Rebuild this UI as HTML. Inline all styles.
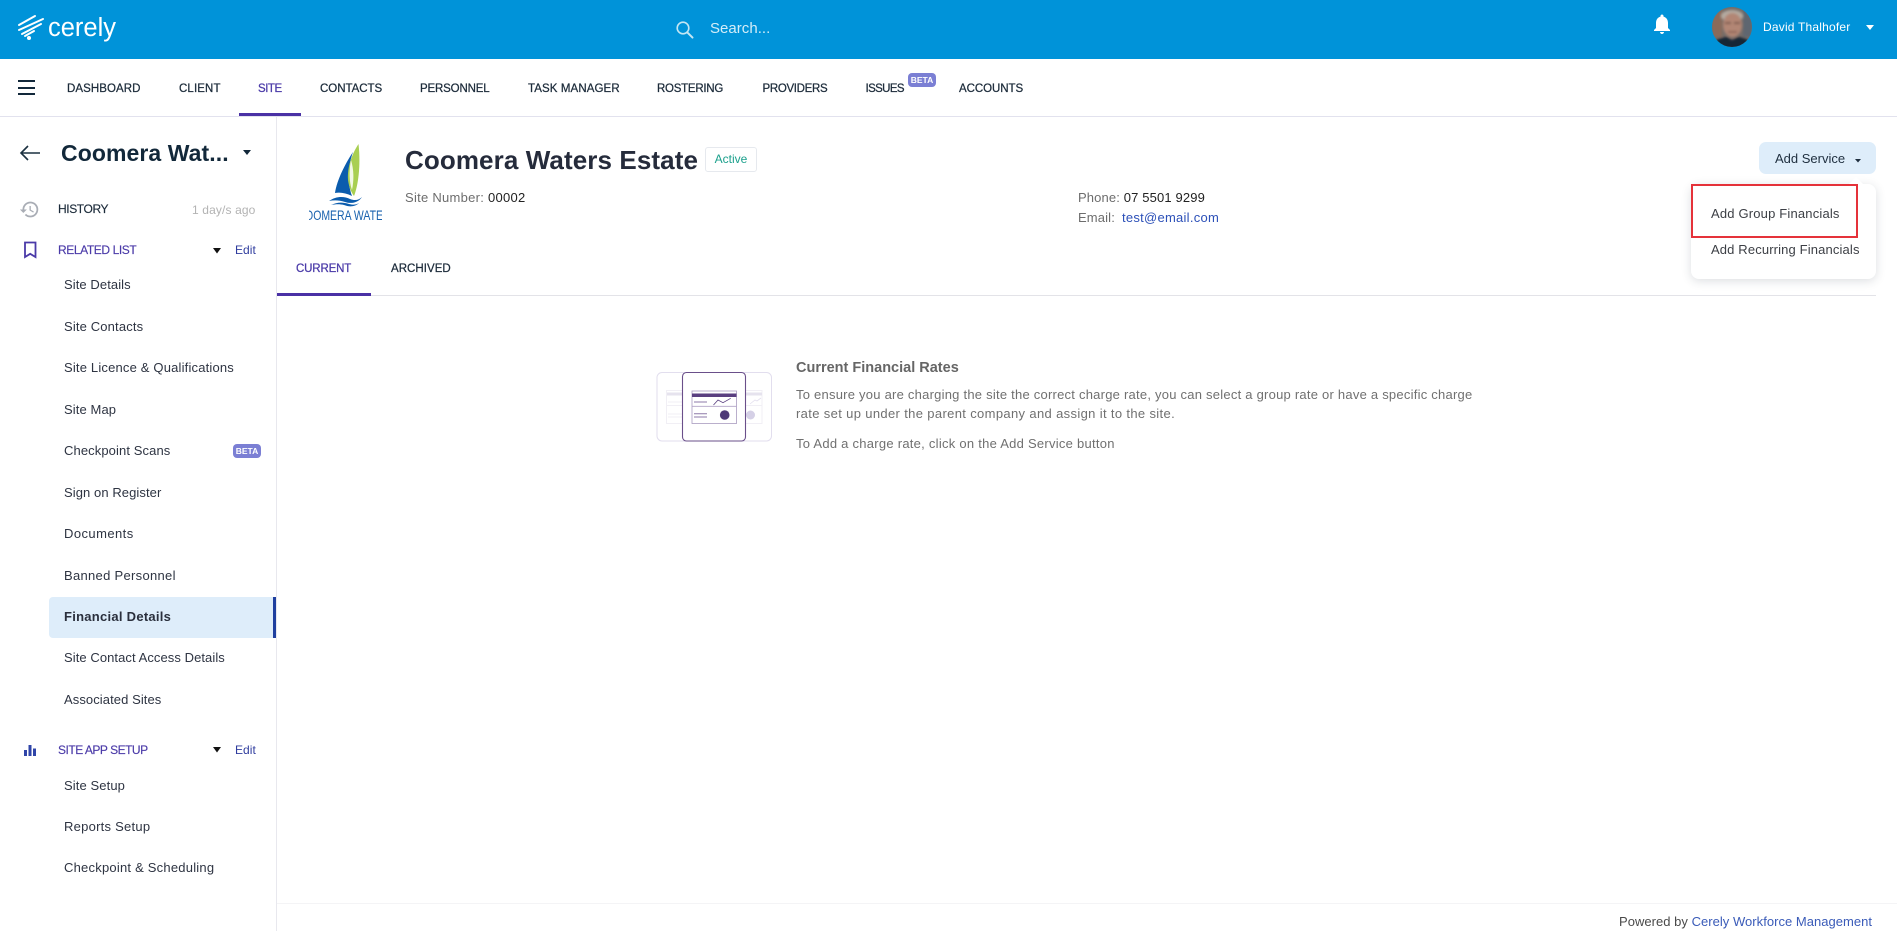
<!DOCTYPE html>
<html lang="en">
<head>
<meta charset="utf-8">
<title>Coomera Waters Estate - Cerely</title>
<style>
html,body{margin:0;padding:0;background:#fff}
body{width:1897px;height:931px;position:relative;overflow:hidden;font-family:"Liberation Sans",Arial,sans-serif;font-size:13px;color:#2b3040}
a{color:inherit;text-decoration:none}
.t{position:absolute;white-space:nowrap;line-height:20px;height:20px}
.b{position:absolute}
svg{position:absolute;overflow:visible}
.nav{font-size:11.5px;color:#1c2b3a;-webkit-text-stroke:.25px #1c2b3a}
.side{font-size:13px;color:#2e3442;left:64px;letter-spacing:.08px}
.sec{font-size:12px;color:#4a3aa8;-webkit-text-stroke:.15px #4a3aa8}
.edit{font-size:12px;letter-spacing:.05px;color:#2f3c9e}
.g{color:#6d6d6d}
.d{color:#222}
.p{left:796px;color:#707070;font-size:13px}
.beta{position:absolute;background:#7b7fd4;color:#fff;font-weight:bold;font-size:8.5px;line-height:14px;text-align:center;border-radius:4px}
</style>
</head>
<body>

<!-- top header -->
<div class="b" style="left:0;top:0;width:1897px;height:59px;background:#0093d9"></div>
<svg style="left:0;top:0" width="60" height="59" viewBox="0 0 60 59">
  <g stroke="#fff" stroke-width="2" stroke-linecap="round" fill="none">
    <path d="M19 25L35 16"/>
    <path d="M19 30L43 19"/>
    <path d="M22 34L41 24"/>
    <path d="M25 36L34 31"/>
  </g>
  <circle cx="29" cy="38" r="2" fill="#fff"/>
</svg>
<div class="t" style="left:48px;top:16px;font-size:25.5px;line-height:24px;height:24px;color:#fff">cerely</div>

<svg style="left:670px;top:18px" width="28" height="24" viewBox="670 18 28 24">
  <circle cx="683" cy="28" r="5.800" fill="none" stroke="#c4e6f3" stroke-width="1.600"/>
  <path d="M687.200 32.300L692.500 37.600" stroke="#c4e6f3" stroke-width="2" stroke-linecap="round"/>
</svg>
<div class="t" style="left:710px;top:19px;font-size:15px;letter-spacing:.03px;color:#d3edf8">Search...</div>

<svg style="left:1650px;top:12px" width="24" height="24" viewBox="0 0 24 24"><path fill="#fff" d="M12 22c1.100 0 2-.9 2-2h-4c0 1.100.9 2 2 2zm6-6v-5c0-3.070-1.630-5.640-4.500-6.320V4c0-.83-.67-1.500-1.500-1.500s-1.500.67-1.500 1.500v.68C7.640 5.360 6 7.920 6 11v5l-2 2v1h16v-1l-2-2z"/></svg>

<svg style="left:1712px;top:7px" width="40" height="40" viewBox="0 0 40 40">
  <defs>
    <clipPath id="av"><circle cx="20" cy="20" r="20"/></clipPath>
    <filter id="bl"><feGaussianBlur stdDeviation="1.300"/></filter>
  </defs>
  <g clip-path="url(#av)">
    <rect width="40" height="40" fill="#746c68"/>
    <g filter="url(#bl)">
      <rect x="0" y="0" width="10" height="30" fill="#8a6a5a"/>
      <rect x="31" y="0" width="9" height="30" fill="#5f6670"/>
      <ellipse cx="20" cy="9" rx="11" ry="6" fill="#b4aaa0"/>
      <ellipse cx="20.500" cy="18" rx="9.500" ry="12" fill="#b28674"/>
      <path d="M13 16h6M22 16h6" stroke="#6b4a40" stroke-width="1.400"/>
      <path d="M16 25h9" stroke="#7c5548" stroke-width="1.300"/>
      <path d="M0 42V36C6 31 12 30 15 30L20 33L26 30C30 30 36 32 40 36V42Z" fill="#192534"/>
    </g>
  </g>
</svg>
<div class="t" style="left:1763px;top:17px;font-size:12px;letter-spacing:.2px;color:#fff">David Thalhofer</div>
<svg style="left:1866px;top:25px" width="8" height="5" viewBox="0 0 8 5"><path d="M0 0H8L4 5Z" fill="#fff"/></svg>

<!-- main nav -->
<div class="b" style="left:0;top:116px;width:1897px;height:1px;background:#e2e2ee"></div>
<div class="b" style="left:18px;top:80px;width:17px;height:2px;background:#12283a"></div>
<div class="b" style="left:18px;top:87px;width:17px;height:2px;background:#12283a"></div>
<div class="b" style="left:18px;top:93px;width:17px;height:2px;background:#12283a"></div>

<div class="t nav" style="left:67px;top:79px;letter-spacing:.07px">DASHBOARD</div>
<div class="t nav" style="left:179px;top:79px;letter-spacing:.12px">CLIENT</div>
<div class="t nav" style="left:258px;top:79px;letter-spacing:-.47px;color:#4a3aa8;-webkit-text-stroke-color:#4a3aa8">SITE</div>
<div class="t nav" style="left:320px;top:79px;letter-spacing:-.03px">CONTACTS</div>
<div class="t nav" style="left:420px;top:79px;letter-spacing:-.16px">PERSONNEL</div>
<div class="t nav" style="left:528px;top:79px;letter-spacing:.1px">TASK MANAGER</div>
<div class="t nav" style="left:657px;top:79px;letter-spacing:-.26px">ROSTERING</div>
<div class="t nav" style="left:762.500px;top:79px;letter-spacing:-.32px">PROVIDERS</div>
<div class="t nav" style="left:865.500px;top:79px;letter-spacing:-.62px">ISSUES</div>
<div class="beta" style="left:908px;top:73px;width:28px;height:14px">BETA</div>
<div class="t nav" style="left:959px;top:79px;letter-spacing:-.06px">ACCOUNTS</div>
<div class="b" style="left:239px;top:113px;width:62px;height:3px;background:#4a31a5"></div>

<!-- sidebar -->
<div class="b" style="left:276px;top:117px;width:1px;height:814px;background:#e8e8ee"></div>

<svg style="left:19px;top:143px" width="22" height="20" viewBox="0 0 22 20"><path d="M21 10H2M9 3L2 10L9 17" fill="none" stroke="#1b3040" stroke-width="1.600"/></svg>
<div class="t" style="left:61px;top:143px;font-size:23px;font-weight:bold;letter-spacing:.08px;color:#12283a">Coomera Wat...</div>
<svg style="left:243px;top:150px" width="8" height="6" viewBox="0 0 8 6"><path d="M0 0H8L4 5Z" fill="#12283a"/></svg>

<svg style="left:19px;top:199px" width="21" height="21" viewBox="0 0 24 24"><path fill="#a9adb5" d="M13 3a9 9 0 0 0-9 9H1l3.890 3.890.07.14L9 12H6c0-3.870 3.130-7 7-7s7 3.130 7 7-3.130 7-7 7c-1.930 0-3.680-.79-4.940-2.060l-1.420 1.420A8.954 8.954 0 0 0 13 21a9 9 0 0 0 0-18zm-1 5v5l4.280 2.540.72-1.210-3.500-2.080V8H12z"/></svg>
<div class="t" style="left:58px;top:199px;font-size:12px;letter-spacing:-.4px;color:#1c2b3a;-webkit-text-stroke:.15px #1c2b3a">HISTORY</div>
<div class="t" style="left:192px;top:200px;font-size:12px;letter-spacing:.13px;color:#b3b3b3">1 day/s ago</div>

<svg style="left:23px;top:241px" width="15" height="18" viewBox="0 0 15 18"><path d="M2 1.500H12.500V16L7.200 12.800L2 16Z" fill="none" stroke="#4a3aa8" stroke-width="1.800"/></svg>
<div class="t sec" style="left:58px;top:240px;letter-spacing:-.4px">RELATED LIST</div>
<svg style="left:213px;top:248px" width="8" height="6" viewBox="0 0 8 6"><path d="M0 0H8L4 5.500Z" fill="#111"/></svg>
<div class="t edit" style="left:235px;top:240px">Edit</div>

<div class="t side" style="top:275px">Site Details</div>
<div class="t side" style="top:317px;letter-spacing:.15px">Site Contacts</div>
<div class="t side" style="top:358px;letter-spacing:.18px">Site Licence &amp; Qualifications</div>
<div class="t side" style="top:400px;letter-spacing:.1px">Site Map</div>
<div class="t side" style="top:441px;letter-spacing:.1px">Checkpoint Scans</div>
<div class="beta" style="left:233px;top:444px;width:28px;height:14px">BETA</div>
<div class="t side" style="top:483px">Sign on Register</div>
<div class="t side" style="top:524px;letter-spacing:.43px">Documents</div>
<div class="t side" style="top:566px;letter-spacing:.3px">Banned Personnel</div>

<div class="b" style="left:49px;top:597px;width:227px;height:41px;background:#deedfa;border-radius:4px 0 0 4px"></div>
<div class="b" style="left:273px;top:597px;width:3px;height:41px;background:#1f3f9f"></div>
<div class="t side" style="top:607px;font-weight:bold;letter-spacing:.27px;color:#2a2f3c">Financial Details</div>

<div class="t side" style="top:648px;letter-spacing:.07px">Site Contact Access Details</div>
<div class="t side" style="top:690px">Associated Sites</div>

<svg style="left:24px;top:745px" width="12" height="11" viewBox="0 0 12 11"><path d="M0 5H3V11H0ZM4.500 0H7.500V11H4.500ZM9 3.500H12V11H9Z" fill="#2f45a8"/></svg>
<div class="t sec" style="left:58px;top:740px;letter-spacing:-.49px">SITE APP SETUP</div>
<svg style="left:213px;top:747px" width="8" height="6" viewBox="0 0 8 6"><path d="M0 0H8L4 5.500Z" fill="#111"/></svg>
<div class="t edit" style="left:235px;top:740px">Edit</div>
<div class="t side" style="top:776px;letter-spacing:.1px">Site Setup</div>
<div class="t side" style="top:817px;letter-spacing:.25px">Reports Setup</div>
<div class="t side" style="top:858px;letter-spacing:.22px">Checkpoint &amp; Scheduling</div>

<!-- site logo -->
<svg style="left:300px;top:140px" width="90" height="90" viewBox="300 140 90 90">
  <defs><clipPath id="lg"><rect x="309" y="140" width="73" height="90"/></clipPath></defs>
  <path d="M353 152C345 164 337 180 335 193C340 192 346 193 352 196C347 182 348 166 353 152Z" fill="#0b5cad"/>
  <path d="M358.500 144C352 154 347 167 348 180C349 187 351 192 354 196C358 186 361 166 358.500 144Z" fill="#a9cf52"/>
  <path d="M351 160C349 170 349 182 352 190C354 180 354 170 351 160Z" fill="#fff" opacity=".85"/>
  <path d="M329 201C336 196 344 196 350 199C355 201 359 200 362 197C358 203 351 204 345 202C339 200 334 200 329 201Z" fill="#0b5cad"/>
  <path d="M331 205C337 202 343 202 349 204C353 205 356 205 359 203C355 207 349 207 344 205C340 204 336 204 331 205Z" fill="#0b5cad"/>
  <g clip-path="url(#lg)"><text x="297.500" y="220" font-family="Liberation Sans, sans-serif" font-size="14" fill="#1a62ae" textLength="100" lengthAdjust="spacingAndGlyphs">COOMERA WATERS</text></g>
</svg>

<!-- site header -->
<div class="t" style="left:405px;top:150px;font-size:26px;font-weight:bold;letter-spacing:.1px;color:#252b3b">Coomera Waters Estate</div>
<div class="b" style="left:705px;top:147px;width:50px;height:23px;border:1px solid #e6e9ee;border-radius:3px;background:#fff;color:#1ba08c;font-size:12px;line-height:23px;text-align:center">Active</div>

<div class="t" style="left:405px;top:188px;letter-spacing:.27px"><span class="g">Site Number: </span><span class="d">00002</span></div>
<div class="t" style="left:1078px;top:188px;letter-spacing:.14px"><span class="g">Phone: </span><span class="d">07 5501 9299</span></div>
<div class="t g" style="left:1078px;top:208px;letter-spacing:.14px">Email:</div>
<a class="t" href="#" style="left:1122px;top:208px;letter-spacing:.26px;color:#2c50b8">test@email.com</a>

<!-- add service -->
<div class="b" style="left:1759px;top:142px;width:117px;height:32px;background:#deedfa;border-radius:7px"></div>
<div class="t" style="left:1775px;top:149px;color:#1f2f3f">Add Service</div>
<svg style="left:1855px;top:159px" width="6" height="4" viewBox="0 0 6 4"><path d="M0 0H6L3 3.500Z" fill="#1f2f3f"/></svg>

<!-- tabs -->
<div class="b" style="left:277px;top:295px;width:1599px;height:1px;background:#e3e3e8"></div>
<div class="t" style="left:296px;top:259px;font-size:11.500px;letter-spacing:-.15px;color:#4a3aa8;-webkit-text-stroke:.25px #4a3aa8">CURRENT</div>
<div class="t" style="left:391px;top:259px;font-size:11.500px;letter-spacing:.04px;color:#1c2b3a;-webkit-text-stroke:.25px #1c2b3a">ARCHIVED</div>
<div class="b" style="left:277px;top:293px;width:94px;height:3px;background:#4a31a5"></div>

<!-- dropdown -->
<div class="b" style="left:1691px;top:184px;width:185px;height:95px;background:#fff;border-radius:8px;box-shadow:0 2px 10px rgba(40,50,70,.16)"></div>
<svg style="left:1848px;top:177px" width="16" height="8" viewBox="0 0 16 8"><path d="M0 8L8 0L16 8Z" fill="#fff"/></svg>
<div class="b" style="left:1691px;top:184px;width:163px;height:50px;border:2px solid #e5323a"></div>
<div class="t" style="left:1711px;top:204px;letter-spacing:.18px;color:#3c3f45">Add Group Financials</div>
<div class="t" style="left:1711px;top:240px;letter-spacing:.14px;color:#3c3f45">Add Recurring Financials</div>

<!-- empty state -->
<svg style="left:650px;top:365px" width="130" height="82" viewBox="650 365 130 82">
  <rect x="657" y="372.500" width="114.500" height="68.500" rx="5" fill="#fff" stroke="#e2deee"/>
  <g fill="none" stroke="#f1eff5">
    <rect x="666.500" y="390.500" width="20" height="33"/>
    <rect x="740" y="390.500" width="22" height="33"/>
    <path d="M666.500 405.500H686M668 402H682M668 414H682M668 417H682M745 405.500H762"/>
  </g>
  <path d="M667 394H682" stroke="#e6e3ee" stroke-width="3"/>
  <path d="M746 394H762" stroke="#e6e3ee" stroke-width="3"/>
  <path d="M750 404L755 400L757 401L761 398" fill="none" stroke="#e3dfee" stroke-width=".8"/>
  <circle cx="750.500" cy="415" r="4.500" fill="#d5d0e6"/>
  <rect x="682.500" y="372.500" width="63" height="68.500" rx="4" fill="#fff" stroke="#6a4f8a" stroke-width="1.100"/>
  <rect x="692" y="391" width="44.500" height="32.500" fill="#fff" stroke="#a99bc0" stroke-width=".8"/>
  <rect x="692" y="393.500" width="44.500" height="3.500" fill="#5a3f80"/>
  <path d="M692 406.300H736.500" stroke="#b0a2c5" stroke-width=".9"/>
  <path d="M694 402H707M694 413.800H707M694 417H707" stroke="#8d7aa8" stroke-width="1"/>
  <path d="M713.500 405L718 400L723 402.700L730.700 398.300" fill="none" stroke="#5a3f80" stroke-width=".8"/>
  <circle cx="724.700" cy="415" r="4.800" fill="#4f3a78"/>
</svg>
<div class="t" style="left:796px;top:358px;font-size:14.500px;font-weight:bold;color:#666">Current Financial Rates</div>
<div class="t p" style="top:385px;letter-spacing:.235px">To ensure you are charging the site the correct charge rate, you can select a group rate or have a specific charge</div>
<div class="t p" style="top:404px;letter-spacing:.35px">rate set up under the parent company and assign it to the site.</div>
<div class="t p" style="top:434px;letter-spacing:.26px">To Add a charge rate, click on the Add Service button</div>

<!-- footer -->
<div class="b" style="left:277px;top:903px;width:1620px;height:1px;background:#f4f4f6"></div>
<div class="t" style="left:1619px;top:912px;font-size:13px;letter-spacing:.03px;color:#4a4a4a">Powered by <a href="#" style="color:#3a5bb8">Cerely Workforce Management</a></div>

</body>
</html>
